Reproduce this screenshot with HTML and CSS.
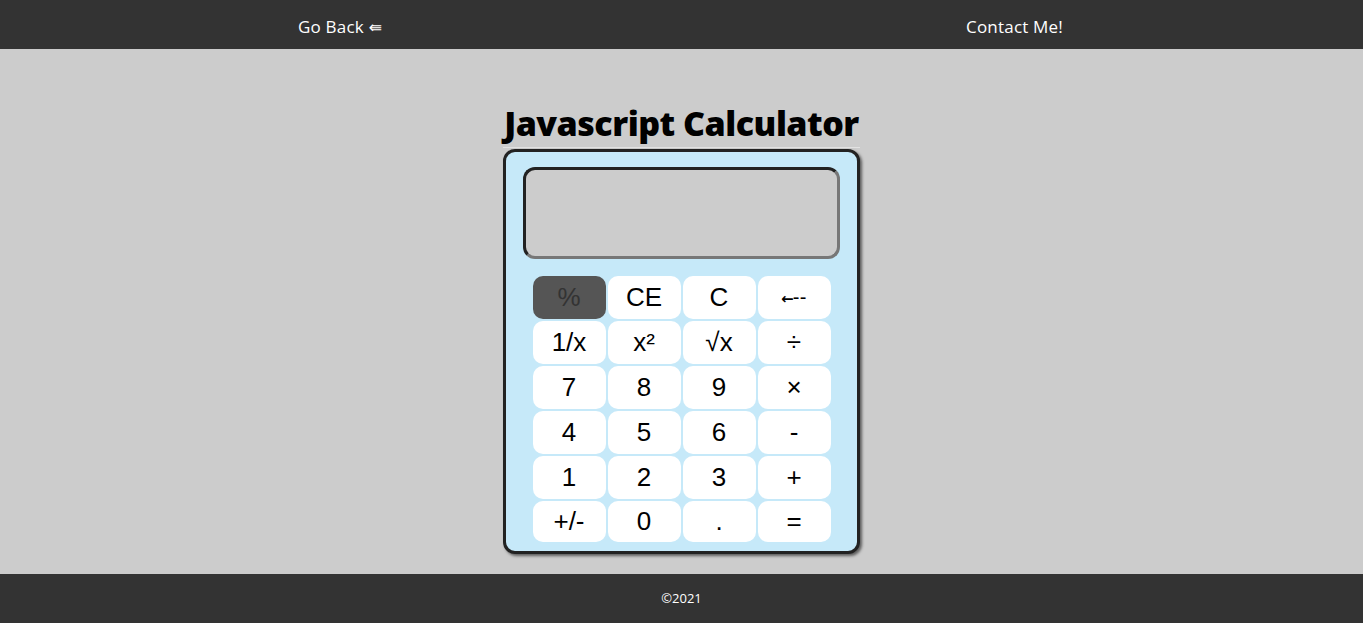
FILE: index.html
```html
<!DOCTYPE html>
<html>
<head>
<meta charset="utf-8">
<link rel="stylesheet" href="styles.css">
</head>
<body>
<header class="nav">
  <a class="nav-link" href="#">Go Back <span class="nav-arrow">&#8666;</span></a>
  <a class="nav-link" href="#">Contact Me!</a>
</header>
<main class="main">
  <div class="wrap">
    <h1 class="title">Javascript Calculator</h1>
    <div class="rule"></div>
    <div class="calc">
      <div class="display"></div>
      <div class="keys">
        <button class="key key-dark">%</button>
        <button class="key">CE</button>
        <button class="key">C</button>
        <button class="key key-back"><span class="back-arrow">&larr;</span>--</button>
        <button class="key">1/x</button>
        <button class="key">x²</button>
        <button class="key">√x</button>
        <button class="key">÷</button>
        <button class="key">7</button>
        <button class="key">8</button>
        <button class="key">9</button>
        <button class="key">×</button>
        <button class="key">4</button>
        <button class="key">5</button>
        <button class="key">6</button>
        <button class="key">-</button>
        <button class="key">1</button>
        <button class="key">2</button>
        <button class="key">3</button>
        <button class="key">+</button>
        <button class="key">+/-</button>
        <button class="key">0</button>
        <button class="key">.</button>
        <button class="key">=</button>
      </div>
    </div>
  </div>
</main>
<footer class="footer">©2021</footer>
</body>
</html>
```

FILE: styles.css
```css
html, body {
  margin: 0;
  padding: 0;
}
body {
  background: #cccccc;
  font-family: "Open Sans", "DejaVu Sans", sans-serif;
  height: 623px;
  display: flex;
  flex-direction: column;
}
.nav {
  height: 49px;
  background: #333333;
  display: flex;
  justify-content: space-around;
  align-items: center;
  flex-shrink: 0;
}
.nav-link {
  color: #ffffff;
  text-decoration: none;
  font-size: 17px;
  letter-spacing: 0.2px;
  padding-top: 3px;
}
.nav-link:first-child {
  margin-left: 6px;
}
.nav-link:last-child {
  margin-right: 8px;
}
.nav-arrow {
  font-family: "DejaVu Sans", sans-serif;
  font-size: 16px;
}
.main {
  flex: 1;
  display: flex;
  justify-content: center;
}
.wrap {
  width: 357px;
  padding-top: 51px;
}
.title {
  margin: 0;
  font-size: 34px;
  font-weight: 800;
  letter-spacing: -0.5px;
  line-height: 47px;
  text-align: center;
  color: #000;
  white-space: nowrap;
}
.rule {
  height: 1px;
  background: #e2e2e2;
  margin-bottom: 1px;
}
.calc {
  box-sizing: border-box;
  height: 405px;
  border: 3px solid #222222;
  border-radius: 12px;
  background: #c6e9f9;
  box-shadow: 2px 2px 3px rgba(0,0,0,0.55);
  padding: 15px 0 0;
  display: flex;
  flex-direction: column;
  align-items: center;
}
.display {
  box-sizing: border-box;
  width: 317px;
  height: 92px;
  border: 3px solid;
  border-color: #222222 #777777 #777777 #222222;
  border-radius: 12px;
  background: #cccccc;
  margin-bottom: 17px;
}
.keys {
  display: grid;
  grid-template-columns: repeat(4, 73px);
  grid-template-rows: repeat(5, 43px) 41px;
  gap: 2px;
}
.key {
  border: none;
  border-radius: 10px;
  background: #ffffff;
  font-family: "Liberation Sans", Arial, sans-serif;
  font-size: 26px;
  color: #000;
  padding: 0 0 2px;
  line-height: 1;
}
.key-back {
  font-size: 20px;
  letter-spacing: 0.5px;
}
.back-arrow {
  font-family: "DejaVu Sans", sans-serif;
  font-size: 15px;
  font-weight: bold;
  letter-spacing: -1px;
}
.key-dark {
  background: #555555;
  color: #333333;
}
.footer {
  height: 49px;
  background: #333333;
  color: #ffffff;
  font-size: 13px;
  display: flex;
  align-items: center;
  justify-content: center;
  flex-shrink: 0;
  padding-bottom: 1px;
  box-sizing: border-box;
}
```
